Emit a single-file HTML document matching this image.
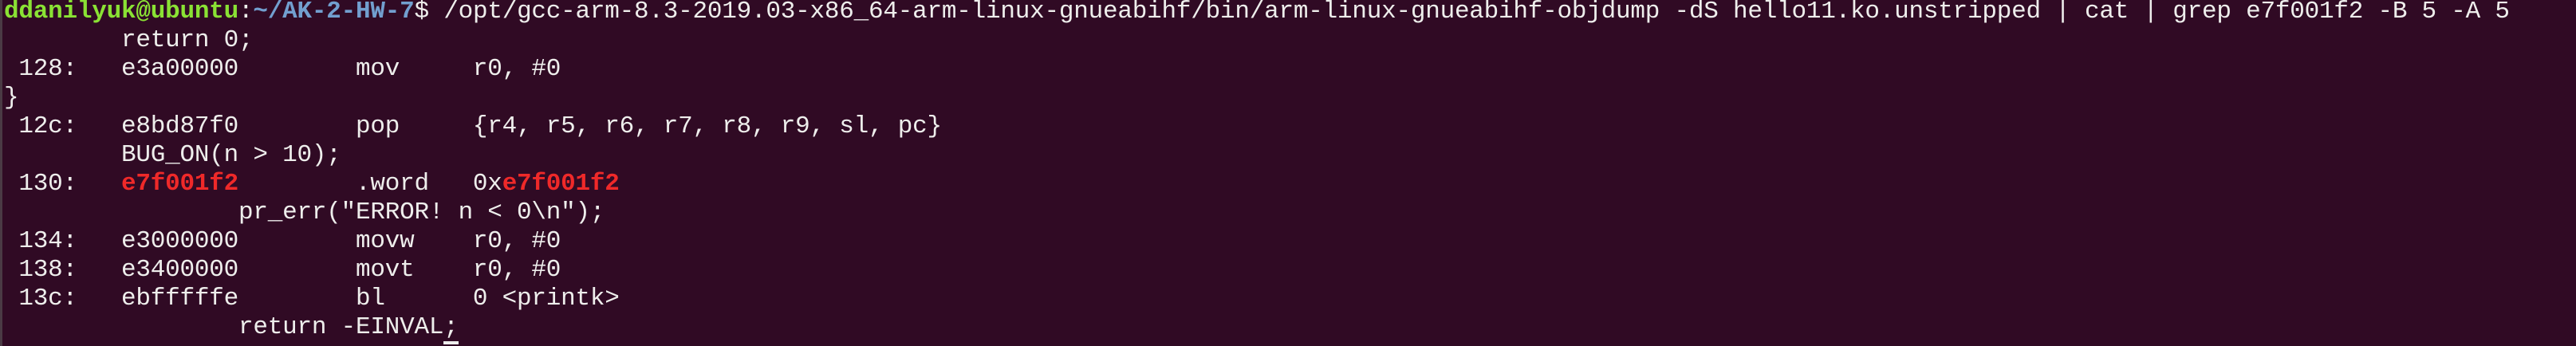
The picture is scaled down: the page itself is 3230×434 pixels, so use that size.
<!DOCTYPE html>
<html><head><style>
html,body{margin:0;padding:0;}
body{width:3230px;height:434px;background:#300a24;overflow:hidden;position:relative;}
.bar{position:absolute;left:0;top:0;width:3px;height:434px;background:#4a3a44;}
pre{position:absolute;left:5px;top:-3px;margin:0;font-family:"Liberation Mono","DejaVu Sans Mono",monospace;font-size:31px;line-height:36px;color:#eeeeec;letter-spacing:-0.23px;}
.g{color:#8ae234;font-weight:bold;}
.b{color:#729fcf;font-weight:bold;}
.r{color:#ef2929;font-weight:bold;}
.cur{border-bottom:4px solid #eeeeec;}
</style></head><body><div class="bar"></div>
<pre><span class="g">ddanilyuk@ubuntu</span>:<span class="b">~/AK-2-HW-7</span>$ /opt/gcc-arm-8.3-2019.03-x86_64-arm-linux-gnueabihf/bin/arm-linux-gnueabihf-objdump -dS hello11.ko.unstripped | cat | grep e7f001f2 -B 5 -A 5
        return 0;
 128:   e3a00000        mov     r0, #0
}
 12c:   e8bd87f0        pop     {r4, r5, r6, r7, r8, r9, sl, pc}
        BUG_ON(n &gt; 10);
 130:   <span class="r">e7f001f2</span>        .word   0x<span class="r">e7f001f2</span>
                pr_err("ERROR! n &lt; 0\n");
 134:   e3000000        movw    r0, #0
 138:   e3400000        movt    r0, #0
 13c:   ebfffffe        bl      0 &lt;printk&gt;
                return -EINVAL<span class="cur">;</span></pre>
</body></html>
